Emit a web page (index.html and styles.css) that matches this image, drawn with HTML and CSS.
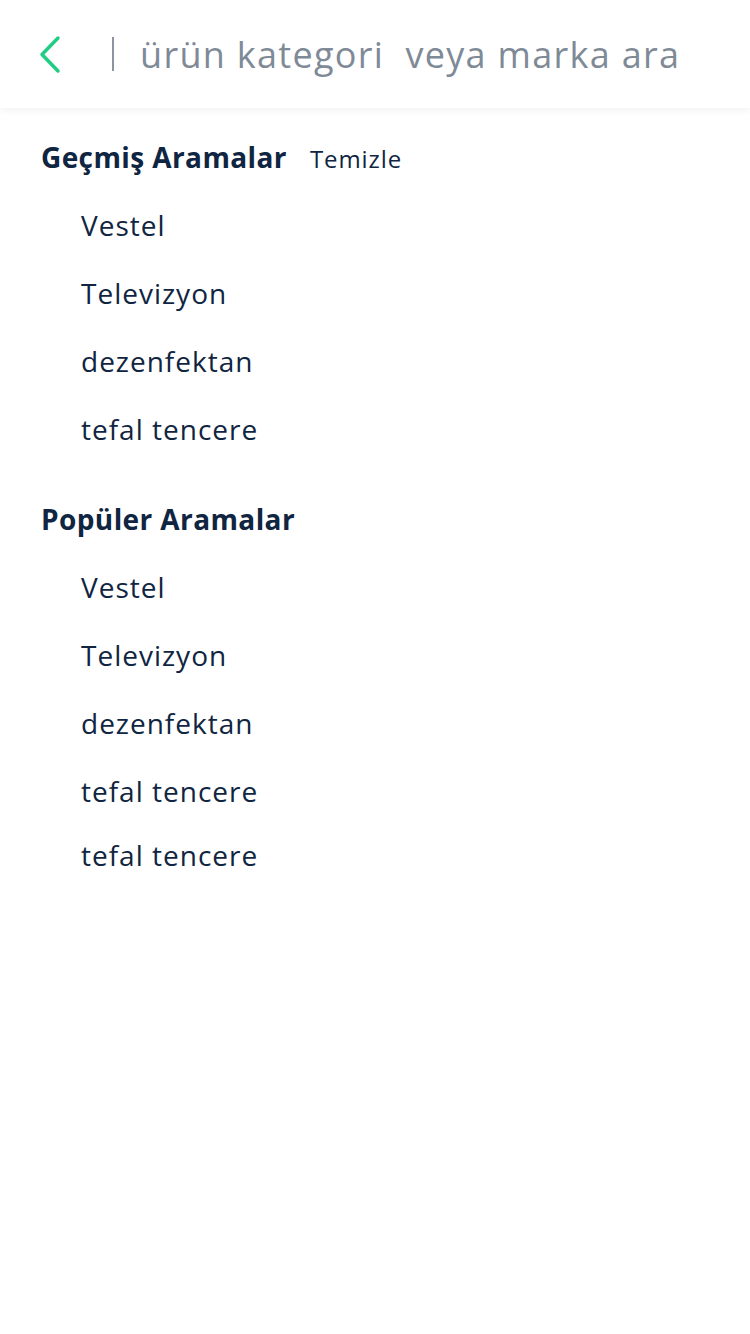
FILE: index.html
```html
<!DOCTYPE html>
<html lang="tr">
<head>
<meta charset="utf-8">
<link rel="stylesheet" href="styles.css">
</head>
<body>
<header class="topbar">
  <svg class="back" width="24" height="40" viewBox="0 0 24 40"><path d="M20 4 L4 20.5 L20 37" fill="none" stroke="#1fce82" stroke-width="3.5" stroke-linecap="round" stroke-linejoin="round"/></svg>
  <span class="divider"></span>
  <span class="placeholder">ürün kategori&nbsp; veya marka ara</span>
</header>
<main class="content">
  <section class="group">
    <div class="group-head">
      <h2 class="group-title">Geçmiş Aramalar</h2>
      <span class="clear">Temizle</span>
    </div>
    <ul class="list">
      <li class="item">Vestel</li>
      <li class="item">Televizyon</li>
      <li class="item">dezenfektan</li>
      <li class="item">tefal tencere</li>
    </ul>
  </section>
  <section class="group">
    <div class="group-head">
      <h2 class="group-title">Popüler Aramalar</h2>
    </div>
    <ul class="list">
      <li class="item">Vestel</li>
      <li class="item">Televizyon</li>
      <li class="item">dezenfektan</li>
      <li class="item">tefal tencere</li>
      <li class="item item-tight">tefal tencere</li>
    </ul>
  </section>
</main>
</body>
</html>
```
FILE: styles.css
```css
* { box-sizing: border-box; }
html, body { margin: 0; padding: 0; background: #fff; }
body {
  width: 750px;
  font-family: "Open Sans", "Liberation Sans", sans-serif;
  color: #0f2541;
}
.topbar {
  height: 108px;
  display: flex;
  align-items: center;
  padding-left: 38px;
  background: #fff;
  box-shadow: 0 2px 8px rgba(0,0,0,0.06);
  position: relative;
  z-index: 1;
}
.back { display: block; flex: none; }
.divider {
  width: 2px;
  height: 34px;
  background: #8a95a1;
  margin-left: 50px;
  flex: none;
}
.placeholder {
  margin-left: 26px;
  font-size: 36px;
  color: #7f8a97;
  white-space: nowrap;
  letter-spacing: 1.3px;
}
.content { padding: 29px 0 0 41px; }
.group + .group { margin-top: 36px; }
.group-head {
  display: flex;
  align-items: baseline;
  gap: 23px;
  height: 40px;
  line-height: 40px;
  margin-bottom: 14px;
}
.group-title {
  margin: 0;
  font-size: 28px;
  font-weight: 700;
  letter-spacing: 0.4px;
}
.clear { font-size: 24px; letter-spacing: 0.9px; }
.list { list-style: none; margin: 0; padding: 0 0 0 40px; }
.item {
  height: 68px;
  line-height: 68px;
  font-size: 28px;
  letter-spacing: 1px;
}
.item-tight { height: 60px; line-height: 60px; }
```
